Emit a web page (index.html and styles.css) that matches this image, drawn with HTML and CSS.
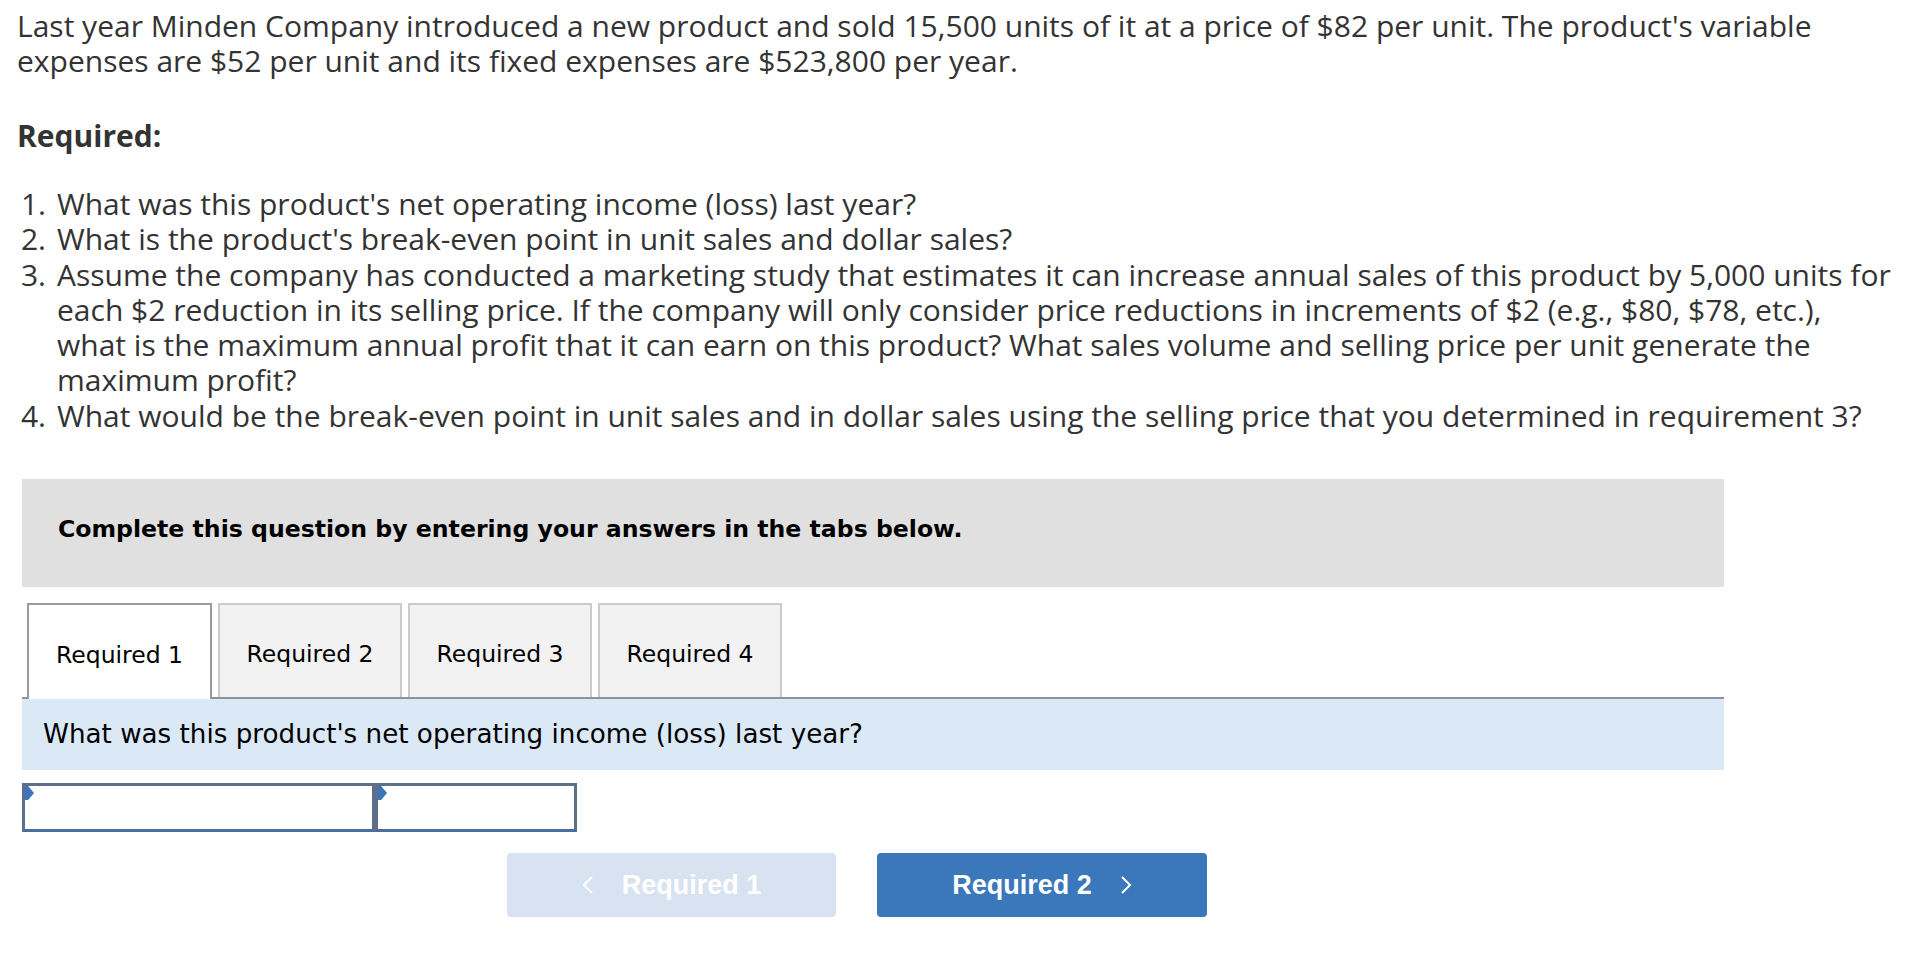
FILE: index.html
```html
<!DOCTYPE html>
<html lang="en">
<head>
<meta charset="utf-8">
<title>Minden Company</title>
<link rel="stylesheet" href="styles.css">
</head>
<body>
<div class="page">
  <p class="intro">Last year Minden Company introduced a new product and sold 15,500 units of it at a price of $82 per unit. The product's variable expenses are $52 per unit and its fixed expenses are $523,800 per year.</p>
  <p class="req-title">Required:</p>
  <ol class="req-list">
    <li>What was this product's net operating income (loss) last year?</li>
    <li>What is the product's break-even point in unit sales and dollar sales?</li>
    <li>Assume the company has conducted a marketing study that estimates it can increase annual sales of this product by 5,000 units for each $2 reduction in its selling price. If the company will only consider price reductions in increments of $2 (e.g., $80, $78, etc.), what is the maximum annual profit that it can earn on this product? What sales volume and selling price per unit generate the maximum profit?</li>
    <li>What would be the break-even point in unit sales and in dollar sales using the selling price that you determined in requirement 3?</li>
  </ol>

  <section class="quiz">
    <div class="instructions">Complete this question by entering your answers in the tabs below.</div>
    <div class="tabs">
      <div class="tab active">Required 1</div>
      <div class="tab">Required 2</div>
      <div class="tab">Required 3</div>
      <div class="tab">Required 4</div>
    </div>
    <div class="question">What was this product's net operating income (loss) last year?</div>
    <div class="answer-row">
      <div class="cell cell-wide"></div>
      <div class="cell cell-narrow"></div>
    </div>
    <div class="nav">
      <button class="nav-btn prev" type="button">
        <svg class="chev" width="12" height="18" viewBox="0 0 12 18"><polyline points="10,1 2,9 10,17" fill="none" stroke="currentColor" stroke-width="2"/></svg>
        <span>Required 1</span>
      </button>
      <button class="nav-btn next" type="button">
        <span>Required 2</span>
        <svg class="chev" width="12" height="18" viewBox="0 0 12 18"><polyline points="2,1 10,9 2,17" fill="none" stroke="currentColor" stroke-width="2"/></svg>
      </button>
    </div>
  </section>
</div>
</body>
</html>
```

FILE: styles.css
```css
html, body {
  margin: 0;
  padding: 0;
  background: #ffffff;
}

.page {
  padding: 8px 17px 40px 17px;
  font-family: "Open Sans", "Liberation Sans", sans-serif;
  font-size: 30px;
  line-height: 35px;
  color: #333333;
}

.intro {
  margin: 0;
}

.req-title {
  margin: 40px 0 0 0;
  font-weight: 700;
}

.req-list {
  list-style: none;
  margin: 33px 0 0 0;
  padding: 0;
  counter-reset: req;
  line-height: 35.3px;
}

.req-list li {
  counter-increment: req;
  display: grid;
  grid-template-columns: 40px 1fr;
}

.req-list li::before {
  content: counter(req) ".";
  text-align: right;
  padding-right: 11px;
}

.quiz {
  margin: 46px 0 0 5px;
  width: 1702px;
  font-family: "DejaVu Sans", Verdana, sans-serif;
  color: #000000;
}

.instructions {
  box-sizing: border-box;
  height: 108px;
  padding: 38px 0 0 36px;
  background: #e0e0e0;
  font-size: 23.6px;
  line-height: 24px;
  font-weight: 700;
}

.tabs {
  display: flex;
  align-items: flex-start;
  gap: 6px;
  height: 94px;
  margin-top: 16px;
  padding-left: 5px;
  border-bottom: 2px solid #8c939c;
}

.tab {
  box-sizing: border-box;
  width: 184px;
  height: 94px;
  padding-top: 7px;
  display: flex;
  align-items: center;
  justify-content: center;
  background: #f2f2f2;
  border: 2px solid #cbcbcb;
  border-bottom: none;
  font-size: 23.5px;
  color: #000000;
}

.tab.active {
  height: 96px;
  margin-bottom: -2px;
  background: #ffffff;
  border-color: #9a9a9a;
  width: 185px;
}

.question {
  box-sizing: border-box;
  height: 71px;
  padding-left: 21px;
  display: flex;
  align-items: center;
  background: #dbe9f7;
  font-size: 26.2px;
}

.answer-row {
  display: flex;
  margin-top: 13px;
  height: 49px;
}

.cell {
  position: relative;
  box-sizing: border-box;
  height: 49px;
  background: #ffffff;
  border: 3px solid #5e7089;
  border-bottom-color: #4a6f9f;
}

.cell::before {
  content: "";
  position: absolute;
  top: 0;
  left: 0;
  width: 9px;
  height: 14px;
  background: #3a74bb;
  clip-path: polygon(0 0, 35% 0, 100% 50%, 35% 100%, 0 100%);
}

.cell-wide {
  width: 353px;
}

.cell-narrow {
  width: 202px;
}

.nav {
  display: flex;
  gap: 41px;
  margin-top: 21px;
  padding-left: 485px;
}

.nav-btn {
  box-sizing: border-box;
  width: 329px;
  height: 64px;
  display: flex;
  align-items: center;
  justify-content: center;
  gap: 28px;
  border: none;
  border-radius: 4px;
  padding: 0;
  font-family: "Liberation Sans", Arial, sans-serif;
  font-size: 27px;
  font-weight: 700;
  color: #ffffff;
  cursor: pointer;
}

.nav-btn.prev {
  background: #d7e3f1;
}

.nav-btn.next {
  width: 330px;
  background: #3b77bb;
}

.chev {
  display: block;
  flex: none;
}
```
